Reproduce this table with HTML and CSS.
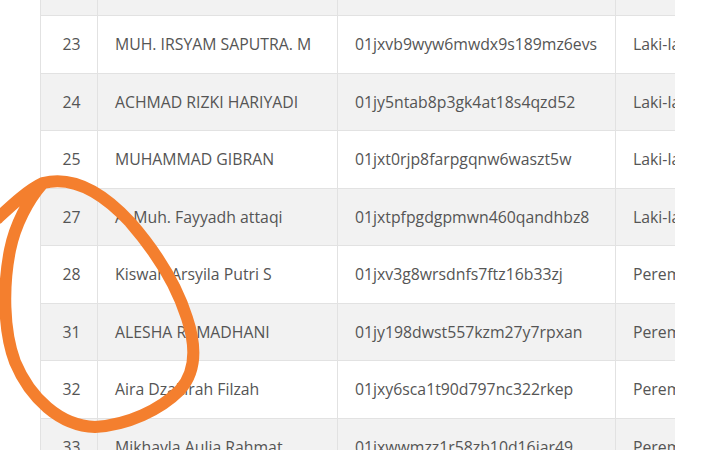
FILE: index.html
```html
<!DOCTYPE html>
<html lang="en">
<head>
    <meta charset="UTF-8">
    <title>Data Siswa</title>
    <link rel="stylesheet" href="styles.css">
</head>
<body>
    <div class="wrap">
        <table class="siswa">
            <tr><td class="no"></td><td></td><td></td><td></td></tr>
            <tr><td class="no">23</td><td>MUH. IRSYAM SAPUTRA. M</td><td>01jxvb9wyw6mwdx9s189mz6evs</td><td>Laki-laki</td></tr>
            <tr><td class="no">24</td><td>ACHMAD RIZKI HARIYADI</td><td>01jy5ntab8p3gk4at18s4qzd52</td><td>Laki-laki</td></tr>
            <tr><td class="no">25</td><td>MUHAMMAD GIBRAN</td><td>01jxt0rjp8farpgqnw6waszt5w</td><td>Laki-laki</td></tr>
            <tr><td class="no">27</td><td>A. Muh. Fayyadh attaqi</td><td>01jxtpfpgdgpmwn460qandhbz8</td><td>Laki-laki</td></tr>
            <tr><td class="no">28</td><td>Kiswah Arsyila Putri S</td><td>01jxv3g8wrsdnfs7ftz16b33zj</td><td>Perempuan</td></tr>
            <tr><td class="no">31</td><td>ALESHA RAMADHANI</td><td>01jy198dwst557kzm27y7rpxan</td><td>Perempuan</td></tr>
            <tr><td class="no">32</td><td>Aira Dzakirah Filzah</td><td>01jxy6sca1t90d797nc322rkep</td><td>Perempuan</td></tr>
            <tr><td class="no">33</td><td>Mikhayla Aulia Rahmat</td><td>01jxwwmzz1r58zb10d16jar49</td><td>Perempuan</td></tr>
        </table>
    </div>

    <!-- coretan spidol -->
    <svg class="coret" width="714" height="450" viewBox="0 0 714 450">
        <path d="M -2 218 C 12 205, 28 190, 43 183 C 75 175, 105 195, 130 222 C 150 245, 175 280, 187 318 C 197 348, 196 372, 180 390 C 160 410, 128 425, 95 427 C 60 426, 30 398, 15 362 C 3 330, 3 285, 10 250 C 15 225, 28 200, 43 183"
              fill="none" stroke="#f47f2e" stroke-width="12" stroke-linecap="round" stroke-linejoin="round"/>
    </svg>
</body>
</html>
```

FILE: styles.css
```css
*{
    margin: 0;
    padding: 0;
    box-sizing: border-box;
}
body{
    width: 714px;
    height: 450px;
    overflow: hidden;
    background: white;
    font-family: "Open Sans", sans-serif;
    position: relative;
}
.wrap{
    margin-left: 40px;
    width: 635px;
    height: 450px;
    overflow: hidden;
}
.siswa{
    border-collapse: collapse;
    width: 700px;
    margin-top: -42.5px;
    table-layout: fixed;
    color: #555;
    font-size: 15.8px;
}
.siswa td{
    height: 57.5px;
    border: 1px solid #e2e2e2;
    padding: 0 17px;
    white-space: nowrap;
    overflow: hidden;
}
.siswa tr:nth-child(odd){
    background: #f2f2f2;
}
.siswa td:nth-child(1){ width: 57px; }
.siswa td:nth-child(2){ width: 240px; }
.siswa td:nth-child(3){ width: 278px; }
.siswa td.no{
    text-align: center;
    padding: 0 0 0 5px;
}
.coret{
    position: absolute;
    top: 0;
    left: 0;
}
```
